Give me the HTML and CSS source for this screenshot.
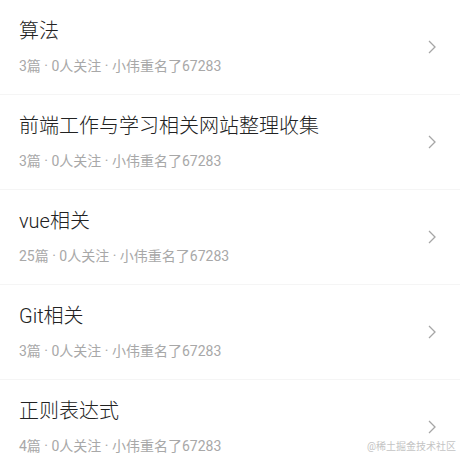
FILE: index.html
```html
<!DOCTYPE html>
<html lang="zh-CN">
<head>
    <meta charset="UTF-8">
    <meta name="viewport" content="width=device-width, initial-scale=1.0">
    <title>专栏</title>
    <link rel="stylesheet" href="styles.css">
</head>
<body>
    <ul class="column-list">
        <li class="column-item">
            <div class="column-info">
                <div class="column-title">算法</div>
                <div class="column-meta">3篇 · 0人关注 · 小伟重名了67283</div>
            </div>
            <svg class="arrow" width="8" height="14" viewBox="0 0 8 14"><path d="M1 1l6 6-6 6" fill="none" stroke="#a6a6a6" stroke-width="1.3"/></svg>
        </li>
        <li class="column-item">
            <div class="column-info">
                <div class="column-title">前端工作与学习相关网站整理收集</div>
                <div class="column-meta">3篇 · 0人关注 · 小伟重名了67283</div>
            </div>
            <svg class="arrow" width="8" height="14" viewBox="0 0 8 14"><path d="M1 1l6 6-6 6" fill="none" stroke="#a6a6a6" stroke-width="1.3"/></svg>
        </li>
        <li class="column-item">
            <div class="column-info">
                <div class="column-title">vue相关</div>
                <div class="column-meta">25篇 · 0人关注 · 小伟重名了67283</div>
            </div>
            <svg class="arrow" width="8" height="14" viewBox="0 0 8 14"><path d="M1 1l6 6-6 6" fill="none" stroke="#a6a6a6" stroke-width="1.3"/></svg>
        </li>
        <li class="column-item">
            <div class="column-info">
                <div class="column-title">Git相关</div>
                <div class="column-meta">3篇 · 0人关注 · 小伟重名了67283</div>
            </div>
            <svg class="arrow" width="8" height="14" viewBox="0 0 8 14"><path d="M1 1l6 6-6 6" fill="none" stroke="#a6a6a6" stroke-width="1.3"/></svg>
        </li>
        <li class="column-item">
            <div class="column-info">
                <div class="column-title">正则表达式</div>
                <div class="column-meta">4篇 · 0人关注 · 小伟重名了67283</div>
            </div>
            <svg class="arrow" width="8" height="14" viewBox="0 0 8 14"><path d="M1 1l6 6-6 6" fill="none" stroke="#a6a6a6" stroke-width="1.3"/></svg>
        </li>
    </ul>
    <div class="watermark">@稀土掘金技术社区</div>
</body>
</html>
```

FILE: styles.css
```css
body {
    margin: 0;
    background-color: #fff;
    font-family: Roboto, "Noto Sans CJK SC", sans-serif;
    overflow: hidden;
}
.column-list {
    list-style: none;
    margin: 0;
    padding: 0;
}
.column-item {
    display: flex;
    align-items: center;
    justify-content: space-between;
    padding: 17px 24px 18px 19px;
    border-bottom: 1px solid #f5f5f5;
}
.column-title {
    font-size: 20px;
    line-height: 28px;
    font-weight: 300;
    color: #222;
}
.column-meta {
    margin-top: 11px;
    font-size: 14px;
    line-height: 20px;
    color: #a8a8a8;
}
.arrow {
    flex-shrink: 0;
}
.watermark {
    position: absolute;
    right: 4px;
    bottom: 7px;
    font-size: 10px;
    color: #c4c4c4;
}
```
